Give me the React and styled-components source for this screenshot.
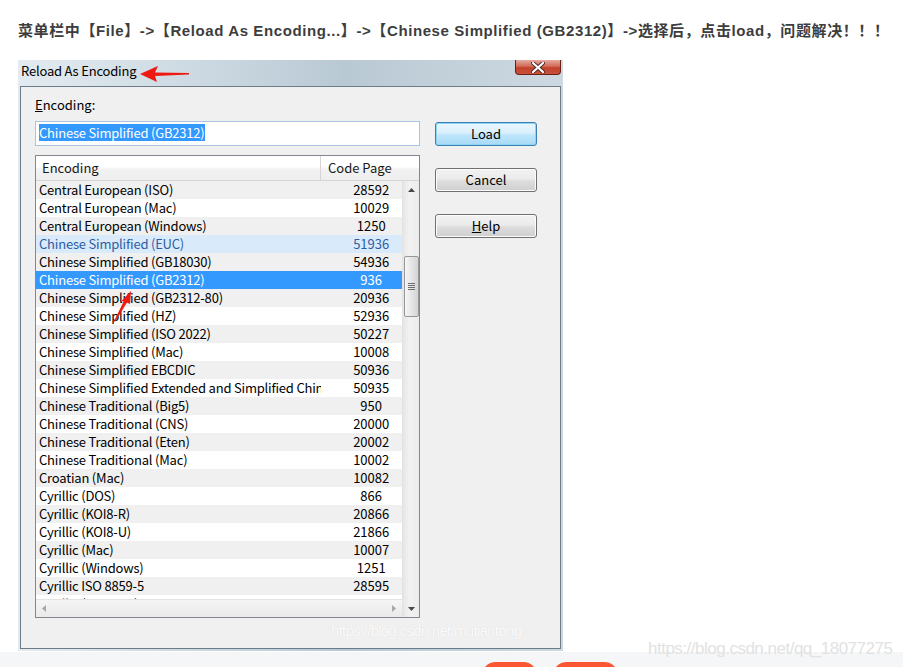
import React from 'react';
import styled, { createGlobalStyle } from 'styled-components';

const ui = `"Noto Sans CJK SC", "Noto Sans", sans-serif`;

const Global = createGlobalStyle`
  html, body { margin: 0; padding: 0; background: #fff; }
  body { overflow: hidden; }
`;

const Page = styled.div`
  position: relative; height: 667px; overflow: hidden;
  display: flex; flex-direction: column; background: #fff;
`;
const Heading = styled.div`
  margin: 21px 0 19px 18px; font-family: "Liberation Sans", "Noto Sans CJK SC", sans-serif;
  font-weight: bold; font-size: 15px; line-height: 20px; color: #3d3d3d; white-space: nowrap;
  letter-spacing: 0.6px;
`;
const Window = styled.div`
  position: relative; margin-left: 18px; width: 545px; box-sizing: border-box;
  padding: 0 2px 2px 2px;
  background: linear-gradient(to right, #e3ebf0 0%, #cbd8e1 35%, #b9c9d4 60%, #cdd9e1 100%);
`;
const TitleBar = styled.div`
  height: 26px; display: flex; align-items: flex-start;
`;
const TitleText = styled.div`
  font-family: ${ui}; font-size: 13px; line-height: 16px; padding: 3px 0 0 1px; color: #000;
  letter-spacing: -0.2px;
`;
const CloseBtn = styled.div`
  margin-left: auto; width: 46px; height: 15px; box-sizing: border-box;
  border: 1px solid #6a2015; border-top: none; border-radius: 0 0 4px 4px;
  background: linear-gradient(#e6a99f 0%, #d26b57 45%, #c2412b 55%, #c8533b 100%);
  display: flex; align-items: center; justify-content: center;
`;
const Client = styled.div`
  position: relative; height: 551px; border: 1px solid #6b7b88; background: #f0f0f0;
  display: flex; padding: 10px 0 0 14px;
`;
const LeftCol = styled.div`
  width: 385px; display: flex; flex-direction: column;
`;
const FieldLabel = styled.div`
  font-family: ${ui}; font-size: 13px; line-height: 16px; color: #000; margin-bottom: 8px;
`;
const TextBox = styled.div`
  height: 25px; box-sizing: border-box; border: 1px solid #a9c4e0; background: #fff;
  padding: 2px 0 0 3px;
`;
const Selection = styled.span`
  background: #3399ff; color: #fff; font-family: ${ui}; font-size: 13px; line-height: 17px;
  display: inline-block; letter-spacing: -0.2px;
`;
const ListView = styled.div`
  margin-top: 9px; border: 1px solid #828790; background: #fff;
  display: flex; flex-direction: column;
`;
const Header = styled.div`
  display: flex; height: 25px; box-sizing: border-box;
  background: linear-gradient(#ffffff 0%, #ffffff 45%, #f2f2f2 55%, #eeeeee 100%);
  border-bottom: 1px solid #d5d5d5;
`;
const HeadCell = styled.div`
  width: ${p => p.$w}px; box-sizing: border-box; padding-left: ${p => p.$pad}px;
  font-family: ${ui}; font-size: 13px; line-height: 24px; color: #1a1a1a;
  border-right: 1px solid ${p => (p.$divider ? '#d5d5d5' : 'transparent')};
`;
const Body = styled.div`
  display: flex; height: 436px;
`;
const Pane = styled.div`
  width: 366px; display: flex; flex-direction: column;
`;
const Rows = styled.div`
  height: 418px; overflow: hidden;
`;
const Row = styled.div`
  display: flex; height: 18px; line-height: 18px; font-family: ${ui}; font-size: 13px;
  background: ${p => (p.$state === 'selected' ? '#3399ff' : p.$state === 'hover' ? '#d9eafb' : p.$odd ? '#ffffff' : '#f0f0f0')};
  color: ${p => (p.$state === 'selected' ? '#fff' : p.$state === 'hover' ? '#2d5ea3' : '#000')};
`;
const NameCell = styled.div`
  width: 284px; padding-left: 3px; overflow: hidden; white-space: nowrap; letter-spacing: -0.2px;
`;
const CodeCell = styled.div`
  width: 81px; box-sizing: border-box; padding-left: 19px; text-align: center;
`;
const HScroll = styled.div`
  height: 18px; box-sizing: border-box; display: flex; align-items: center; justify-content: space-between;
  padding: 0 6px 0 6px; border-top: 1px solid #e3e3e3;
  background: linear-gradient(#f5f5f5, #eaeaea);
`;
const VScroll = styled.div`
  width: 17px; display: flex; flex-direction: column; align-items: center;
  background: linear-gradient(to right, #e6e6e6, #f2f2f2 40%, #ececec);
  border-left: 1px solid #e2e2e2; box-sizing: border-box;
`;
const ArrowBox = styled.div`
  height: 17px; width: 100%; display: flex; align-items: center; justify-content: center;
`;
const Thumb = styled.div`
  margin-top: 58px; width: 15px; height: 61px; box-sizing: border-box;
  border: 1px solid #979797; border-radius: 2px;
  background: linear-gradient(to right, #f6f6f6, #e5e5e5 50%, #d4d4d4);
  display: flex; flex-direction: column; align-items: center; justify-content: center; gap: 1px;
`;
const Grip = styled.div`
  width: 7px; height: 1px; background: #6e6e6e;
`;
const Spacer = styled.div` flex: 1; `;
const RightCol = styled.div`
  margin-left: 15px; padding-top: 25px; display: flex; flex-direction: column; gap: 22px;
`;
const Button = styled.div`
  width: 102px; height: 24px; box-sizing: border-box; border-radius: 3px;
  border: 1px solid ${p => (p.$default ? '#3c7fb1' : '#707070')};
  background: ${p => (p.$default
    ? 'linear-gradient(#eaf6fd 0%, #d9f0fc 45%, #bee6fd 55%, #a7d9f5 100%)'
    : 'linear-gradient(#f2f2f2 0%, #ebebeb 45%, #dddddd 55%, #cfcfcf 100%)')};
  box-shadow: inset 0 0 0 1px ${p => (p.$default ? '#8ed4f5' : '#fcfcfc')};
  font-family: ${ui}; font-size: 13px; line-height: 22px; text-align: center; color: #000;
`;
const Mark = styled.div`
  position: absolute; left: ${p => p.$x}px; top: ${p => p.$y}px; pointer-events: none;
  font-family: "Liberation Sans", Arial, sans-serif; font-size: ${p => p.$size}px;
  letter-spacing: ${p => p.$ls}px; color: ${p => p.$color}; white-space: nowrap;
  text-shadow: ${p => p.$shadow || 'none'};
`;
const Annot = styled.svg`
  position: absolute; left: ${p => p.$x}px; top: ${p => p.$y}px; pointer-events: none;
`;
const BottomBar = styled.div`
  margin-top: 1px; flex: 1; background: #f5f6f7; display: flex; gap: 14px;
  padding: 10px 0 0 481px;
`;
const Pill = styled.div`
  flex: none; width: ${p => p.$w}px; height: 30px; border-radius: 15px; background: #fc5531;
`;

const rows = [
  ['Central European (ISO)', '28592'],
  ['Central European (Mac)', '10029'],
  ['Central European (Windows)', '1250'],
  ['Chinese Simplified (EUC)', '51936', 'hover'],
  ['Chinese Simplified (GB18030)', '54936'],
  ['Chinese Simplified (GB2312)', '936', 'selected'],
  ['Chinese Simplified (GB2312-80)', '20936'],
  ['Chinese Simplified (HZ)', '52936'],
  ['Chinese Simplified (ISO 2022)', '50227'],
  ['Chinese Simplified (Mac)', '10008'],
  ['Chinese Simplified EBCDIC', '50936'],
  ['Chinese Simplified Extended and Simplified Chinese', '50935'],
  ['Chinese Traditional (Big5)', '950'],
  ['Chinese Traditional (CNS)', '20000'],
  ['Chinese Traditional (Eten)', '20002'],
  ['Chinese Traditional (Mac)', '10002'],
  ['Croatian (Mac)', '10082'],
  ['Cyrillic (DOS)', '866'],
  ['Cyrillic (KOI8-R)', '20866'],
  ['Cyrillic (KOI8-U)', '21866'],
  ['Cyrillic (Mac)', '10007'],
  ['Cyrillic (Windows)', '1251'],
  ['Cyrillic ISO 8859-5', '28595'],
  ['Cyrillic (Unicode)', '1200'],
];

const Tri = ({ dir, color = '#4a4a4a' }) => {
  const pts = {
    up: '0,4 3.5,0 7,4',
    down: '0,0 7,0 3.5,4',
    left: '4,0 4,7 0,3.5',
    right: '0,0 4,3.5 0,7',
  }[dir];
  const vertical = dir === 'up' || dir === 'down';
  return (
    <svg width={vertical ? 7 : 4} height={vertical ? 4 : 7} viewBox={vertical ? '0 0 7 4' : '0 0 4 7'}>
      <polygon points={pts} fill={color} />
    </svg>
  );
};

export default function App() {
  return (
    <Page>
      <Global />
      <Heading>菜单栏中【File】-&gt;【Reload As Encoding...】-&gt;【Chinese Simplified (GB2312)】-&gt;选择后，点击load，问题解决！！！</Heading>
      <Window>
        <TitleBar>
          <TitleText>Reload As Encoding</TitleText>
          <CloseBtn>
            <svg width="14" height="11" viewBox="0 0 14 11">
              <path d="M2 1 L12 10 M12 1 L2 10" stroke="#4a2a26" strokeWidth="4" strokeLinecap="round" />
              <path d="M2 1 L12 10 M12 1 L2 10" stroke="#ffffff" strokeWidth="2.2" strokeLinecap="round" />
            </svg>
          </CloseBtn>
        </TitleBar>
        <Client>
          <LeftCol>
            <FieldLabel><u>E</u>ncoding:</FieldLabel>
            <TextBox><Selection>Chinese Simplified (GB2312)</Selection></TextBox>
            <ListView>
              <Header>
                <HeadCell $w={285} $pad={6} $divider>Encoding</HeadCell>
                <HeadCell $w={98} $pad={7}>Code Page</HeadCell>
              </Header>
              <Body>
                <Pane>
                  <Rows>
                    {rows.map(([name, code, state], i) => (
                      <Row key={name} $odd={i % 2 === 1} $state={state}>
                        <NameCell>{name}</NameCell>
                        <CodeCell>{code}</CodeCell>
                      </Row>
                    ))}
                  </Rows>
                  <HScroll>
                    <Tri dir="left" color="#a8a8a8" />
                    <Tri dir="right" color="#a8a8a8" />
                  </HScroll>
                </Pane>
                <VScroll>
                  <ArrowBox><Tri dir="up" /></ArrowBox>
                  <Thumb><Grip /><Grip /><Grip /><Grip /></Thumb>
                  <Spacer />
                  <ArrowBox><Tri dir="down" /></ArrowBox>
                </VScroll>
              </Body>
            </ListView>
          </LeftCol>
          <RightCol>
            <Button $default>Load</Button>
            <Button>Cancel</Button>
            <Button><u>H</u>elp</Button>
          </RightCol>
          <Mark $x={310} $y={535} $size={15} $ls={-0.7} $color="#fbfbfb" $shadow="0 0 1px #d6d6d6">
            https://blog.csdn.net/mutiantong
          </Mark>
        </Client>
        <Annot $x={122} $y={6} width="50" height="17" viewBox="0 0 50 17">
          <polygon points="0,8 18,0 15,6.5 49,7 49,8.5 15,10 17,16" fill="#ee1a12" />
        </Annot>
        <Annot $x={95} $y={230} width="20" height="33" viewBox="0 0 20 33">
          <polygon points="18,1 17,14 14,12.5 2,32 1,31 11,11 8,11.5" fill="#ee1a12" />
        </Annot>
      </Window>
      <BottomBar>
        <Pill $w={57} />
        <Pill $w={67} />
      </BottomBar>
      <Mark $x={648} $y={639} $size={17} $ls={-0.5} $color="#e2e2e2">
        https://blog.csdn.net/qq_18077275
      </Mark>
    </Page>
  );
}
